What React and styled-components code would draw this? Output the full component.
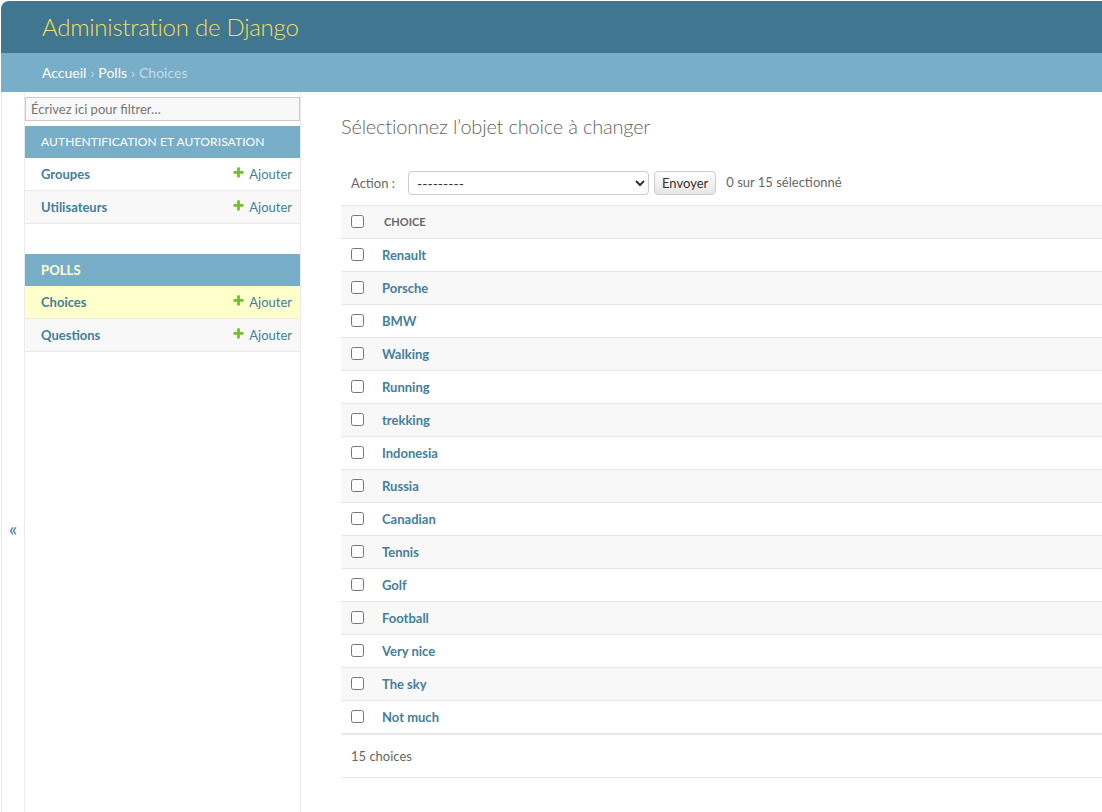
import React from 'react';
import styled, { createGlobalStyle } from 'styled-components';

const FONT = `Lato, "Open Sans", sans-serif`;

const GlobalStyle = createGlobalStyle`
  * { box-sizing: border-box; }
  html, body { margin: 0; background: #fff; overflow: hidden; }
  body {
    padding: 1px 0 0 1px;
    font-family: ${FONT};
    color: #333;
    font-size: 14px;
  }
`;

const Header = styled.header`
  height: 52px;
  display: flex;
  align-items: center;
  padding: 0 41px;
  background: #417690;
  border-top-left-radius: 8px;
`;

const Branding = styled.h1`
  margin: 0;
  font-size: 24px;
  font-weight: 300;
  letter-spacing: -0.25px;
  color: #f5dd5d;
  line-height: 1;
`;

const Breadcrumbs = styled.nav`
  height: 39px;
  display: flex;
  align-items: center;
  padding: 0 41px;
  background: #79aec8;
  color: #c4dce8;
  font-size: 14px;
`;

const Crumb = styled.a`
  color: #fff;
  text-decoration: none;
`;

const Sep = styled.span`
  margin: 0 4px;
`;

const Main = styled.div`
  display: flex;
  min-height: calc(100vh - 92px);
  border-left: 1px solid #e6e6e6;
`;

const Toggle = styled.button`
  flex: 0 0 23px;
  width: 23px;
  border: 0;
  border-right: 1px solid #eaeaea;
  background: #fff;
  color: #447e9b;
  font-family: ${FONT};
  font-size: 20px;
  padding: 152px 0 0;
  display: flex;
  align-items: center;
  justify-content: center;
  cursor: pointer;
`;

const Sidebar = styled.nav`
  flex: 0 0 276px;
  width: 276px;
  min-width: 0;
  overflow: hidden;
  border-right: 1px solid #eaeaea;
`;

const Filter = styled.input`
  display: block;
  width: 100%;
  height: 24px;
  margin: 5px 0;
  padding: 2px 5px;
  border: 1px solid #ccc;
  background: #f8f8f8;
  font-family: ${FONT};
  font-size: 13px;
  color: #333;
  &::placeholder { color: #757575; }
`;

const Module = styled.div`
  margin-bottom: 30px;
`;

const Caption = styled.div`
  padding: 8px 16px;
  background: #79aec8;
  color: ${(p) => (p.$current ? '#ffc' : '#fff')};
  font-weight: ${(p) => (p.$current ? 700 : 400)};
  font-size: ${(p) => (p.$current ? '13px' : '12px')};
  line-height: 16px;
  letter-spacing: 0.1px;
  text-transform: uppercase;
  white-space: nowrap;
`;

const ModelRow = styled.div`
  display: flex;
  justify-content: space-between;
  align-items: center;
  padding: 8px 8px 8px 16px;
  line-height: 16px;
  font-size: 13px;
  border-bottom: 1px solid #e8e8e8;
  background: ${(p) => (p.$current ? '#ffffcc' : p.$alt ? '#f8f8f8' : '#fff')};
`;

const ModelLink = styled.a`
  color: #447e9b;
  font-weight: 700;
  text-decoration: none;
`;

const AddLink = styled.a`
  display: inline-flex;
  align-items: center;
  gap: 4px;
  color: #447e9b;
  text-decoration: none;
  svg { margin-top: -4px; }
`;

const Content = styled.main`
  flex: 1;
  min-width: 0;
  padding: 22px 0 0 40px;
`;

const Title = styled.h1`
  margin: 0 0 23px;
  font-size: 20px;
  line-height: 24px;
  font-weight: 300;
  letter-spacing: -0.2px;
  color: #666;
`;

const Actions = styled.div`
  display: flex;
  align-items: center;
  padding: 10px;
  line-height: 24px;
  font-size: 13px;
  color: #666;
`;

const Select = styled.select`
  width: 241px;
  height: 24px;
  margin-left: 13px;
  padding: 0 0 0 4px;
  border: 1px solid #ccc;
  border-radius: 4px;
  background: #fff;
  color: #333;
  font-family: ${FONT};
  font-size: 14px;
`;

const SubmitButton = styled.button`
  height: 24px;
  margin-left: 5px;
  padding: 0 7px;
  border: 1px solid #ccc;
  border-radius: 4px;
  background: #fff;
  box-shadow: 0 -15px 20px -10px rgba(0, 0, 0, 0.15) inset;
  color: #333;
  font-family: ${FONT};
  font-size: 13px;
  line-height: 1;
`;

const Counter = styled.span`
  margin-left: 10px;
  margin-top: -2px;
`;

const Table = styled.table`
  width: 100%;
  border-collapse: collapse;
  font-size: 13px;
`;

const HeadCell = styled.th`
  background: #f8f8f8;
  border-top: 1px solid #e8e8e8;
  border-bottom: 1px solid #e8e8e8;
  color: #666;
  font-size: 11px;
  font-weight: 700;
  text-transform: uppercase;
  text-align: left;
  line-height: 16px;
  vertical-align: middle;
  padding: ${(p) => (p.$check ? '0 10px' : '8px 10px')};
  width: ${(p) => (p.$check ? '33px' : 'auto')};
`;

const Row = styled.tr`
  background: ${(p) => (p.$alt ? '#f8f8f8' : '#fff')};
`;

const Cell = styled.td`
  padding: ${(p) => (p.$check ? '0 10px' : '8px')};
  width: ${(p) => (p.$check ? '33px' : 'auto')};
  height: 32px;
  line-height: 16px;
  border-bottom: 1px solid #e8e8e8;
  vertical-align: middle;
`;

const Check = styled.input`
  display: block;
  margin: -2px 0 0;
  width: 13px;
  height: 13px;
`;

const RowLink = styled.a`
  color: #447e9b;
  font-weight: 700;
  text-decoration: none;
`;

const Paginator = styled.p`
  margin: 0;
  padding: 10px;
  line-height: 22px;
  font-size: 13px;
  color: #666;
  border-top: 1px solid #e8e8e8;
  border-bottom: 1px solid #e8e8e8;
`;

const PlusIcon = () => (
  <svg width="13" height="13" viewBox="0 0 1792 1792" aria-hidden="true">
    <path
      fill="#70bf2b"
      d="M1600 796v192q0 40-28 68t-68 28h-416v416q0 40-28 68t-68 28h-192q-40 0-68-28t-28-68v-416h-416q-40 0-68-28t-28-68v-192q0-40 28-68t68-28h416v-416q0-40 28-68t68-28h192q40 0 68 28t28 68v416h416q40 0 68 28t28 68z"
    />
  </svg>
);

const choices = [
  'Renault', 'Porsche', 'BMW', 'Walking', 'Running', 'trekking', 'Indonesia',
  'Russia', 'Canadian', 'Tennis', 'Golf', 'Football', 'Very nice', 'The sky', 'Not much',
];

const apps = [
  {
    name: 'Authentification et autorisation',
    models: ['Groupes', 'Utilisateurs'],
  },
  {
    name: 'Polls',
    current: true,
    models: ['Choices', 'Questions'],
    currentModel: 'Choices',
  },
];

export default function App() {
  return (
    <>
      <GlobalStyle />
      <Header>
        <Branding>Administration de Django</Branding>
      </Header>
      <Breadcrumbs>
        <Crumb href="#">Accueil</Crumb>
        <Sep>›</Sep>
        <Crumb href="#">Polls</Crumb>
        <Sep>›</Sep>
        <span>Choices</span>
      </Breadcrumbs>
      <Main>
        <Toggle aria-label="Toggle navigation">«</Toggle>
        <Sidebar>
          <Filter placeholder="Écrivez ici pour filtrer…" />
          {apps.map((app) => (
            <Module key={app.name}>
              <Caption $current={app.current}>{app.name}</Caption>
              {app.models.map((m, i) => (
                <ModelRow key={m} $alt={i % 2 === 1} $current={app.currentModel === m}>
                  <ModelLink href="#">{m}</ModelLink>
                  <AddLink href="#">
                    <PlusIcon />
                    Ajouter
                  </AddLink>
                </ModelRow>
              ))}
            </Module>
          ))}
        </Sidebar>
        <Content>
          <Title>Sélectionnez l’objet choice à changer</Title>
          <Actions>
            <label>Action :</label>
            <Select defaultValue="">
              <option value="">---------</option>
              <option value="delete">Supprimer les choices sélectionnés</option>
            </Select>
            <SubmitButton type="button">Envoyer</SubmitButton>
            <Counter>0 sur 15 sélectionné</Counter>
          </Actions>
          <Table>
            <thead>
              <tr>
                <HeadCell $check>
                  <Check type="checkbox" />
                </HeadCell>
                <HeadCell>Choice</HeadCell>
              </tr>
            </thead>
            <tbody>
              {choices.map((c, i) => (
                <Row key={c} $alt={i % 2 === 1}>
                  <Cell $check>
                    <Check type="checkbox" />
                  </Cell>
                  <Cell>
                    <RowLink href="#">{c}</RowLink>
                  </Cell>
                </Row>
              ))}
            </tbody>
          </Table>
          <Paginator>15 choices</Paginator>
        </Content>
      </Main>
    </>
  );
}
